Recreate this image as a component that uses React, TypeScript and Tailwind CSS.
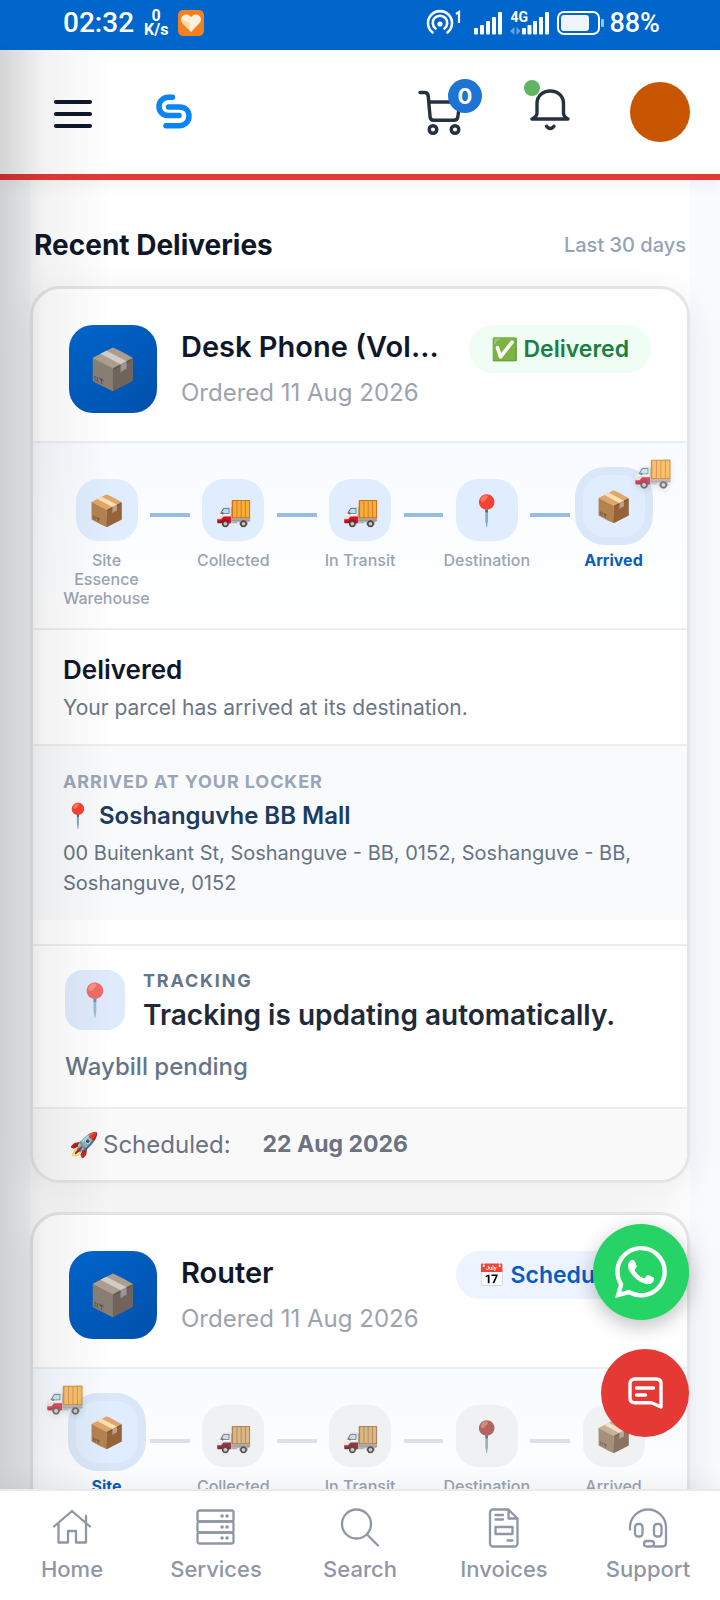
import type { ReactNode } from "react";

type StepState = "done" | "active" | "idle";
interface Step {
  icon: string;
  label: string;
  state: StepState;
  truck?: "left" | "right";
}

function StatusBar() {
  return (
    <div className="flex h-[50px] shrink-0 items-center justify-between bg-[#0066cc] pr-[60px] pb-1 pl-[63px] font-['Roboto',sans-serif] text-white">
      <div className="flex items-center gap-2.5">
        <span className="text-[28px] leading-none font-medium">02:32</span>
        <span className="flex flex-col items-center text-[16px] leading-[14px] font-bold">
          <span>0</span>
          <span>K/s</span>
        </span>
        <svg viewBox="0 0 26 26" className="size-[26px]" aria-hidden="true">
          <rect width="26" height="26" rx="5" fill="#f4801f" />
          <path d="M13 22 4.5 13a5 5 0 0 1 7-7.2L13 7l1.500-1.200a5 5 0 0 1 7 7.200z" fill="#fff1dc" />
          <path d="m3.500 9 9.500 5-3 5-5.500-5.800z" fill="#fbd7a8" />
        </svg>
      </div>
      <div className="flex items-center gap-1">
        <svg viewBox="0 0 36 28" className="h-7 w-9" fill="none" stroke="#fff" strokeWidth="2.600" aria-hidden="true">
          <path d="M6.500 23.500a12 12 0 1 1 15 0M9.500 19.500a7.200 7.200 0 1 1 9 0" strokeLinecap="round" />
          <circle cx="14" cy="15" r="2.600" fill="#fff" stroke="none" />
          <path d="m30 5 3-2v11" strokeWidth="2.200" />
        </svg>
        <svg viewBox="0 0 28 24" className="ml-2 h-6 w-7" fill="#fff" aria-hidden="true">
          <rect x="0" y="17" width="4" height="6.500" rx="1" />
          <rect x="6" y="14" width="4" height="9.500" rx="1" />
          <rect x="12" y="10" width="4" height="13.500" rx="1" />
          <rect x="18" y="6" width="4" height="17.500" rx="1" />
          <rect x="24" y="1" width="4" height="22.500" rx="1" />
        </svg>
        <span className="relative ml-1 flex">
          <span className="absolute -top-0.5 left-0 text-[14px] leading-4 font-bold">4G</span>
          <svg viewBox="0 0 39 24" className="h-6 w-[39px]" fill="#fff" aria-hidden="true">
            <path d="M4.500 16v8L0 20zM6.500 16v8l4-4z" opacity=".4" />
            <rect x="12" y="17" width="4" height="6.500" rx="1" />
            <rect x="17.500" y="14" width="4" height="9.500" rx="1" />
            <rect x="23" y="10" width="4" height="13.500" rx="1" />
            <rect x="29" y="6" width="4" height="17.500" rx="1" />
            <rect x="35" y="1" width="4" height="22.500" rx="1" />
          </svg>
        </span>
        <svg viewBox="0 0 48 26" className="ml-1 h-[26px] w-12" aria-hidden="true">
          <rect x="1" y="2" width="41" height="22" rx="6" fill="none" stroke="#fff" strokeWidth="2" />
          <rect x="4" y="5" width="28" height="16" rx="3" fill="#f1f5fb" />
          <rect x="44" y="9" width="3" height="8" rx="1" fill="#fff" opacity=".6" />
        </svg>
        <span className="text-[27px] leading-none font-medium">88%</span>
      </div>
    </div>
  );
}

function Header() {
  return (
    <header className="relative flex h-[130px] shrink-0 items-center border-b-6 border-[#e53935] bg-white pr-[30px] pl-[54px] shadow-[0_4px_16px_rgba(15,23,42,0.06)]">
      <button aria-label="Open menu" className="mt-1 flex w-[38px] flex-col gap-2">
        <span className="h-1 rounded-full bg-[#0f172a]" />
        <span className="h-1 rounded-full bg-[#0f172a]" />
        <span className="h-1 rounded-full bg-[#0f172a]" />
      </button>
      <a href="#home" aria-label="Site Essence" className="ml-16">
        <svg viewBox="0 0 36 36" className="size-9" fill="none" stroke="#0a84f0" strokeWidth="5.500" strokeLinecap="round" aria-hidden="true">
          <path d="M16.500 3.300h-4C7 3.300 3 7.200 3 12.300s3.600 9.200 9 9.200h11" />
          <path d="M12.500 13h11c5.500 0 9.500 3.500 9.500 9s-4 9.800-9.500 9.800H10" />
        </svg>
      </a>
      <div className="ml-auto flex items-center">
        <button aria-label="Cart" className="relative">
          <svg viewBox="0 0 44 46" className="h-[46px] w-11" fill="none" stroke="#26313f" strokeWidth="3.400" strokeLinecap="round" strokeLinejoin="round" aria-hidden="true">
            <path d="M2 3.500h4.500c2.500 0 3.500 1.500 3.700 3.500l1.900 21c.2 2.200 1.300 3.200 3.400 3.200h20.500c2.200 0 3.500-1 3.800-3.200L42 13H11" />
            <circle cx="15" cy="40.500" r="3.800" />
            <circle cx="37" cy="40.500" r="3.800" />
          </svg>
          <span className="absolute -top-2.5 left-[30px] flex size-[34px] items-center justify-center rounded-full bg-[#1d74d3] text-[22px] leading-none font-bold text-white">0</span>
        </button>
        <button aria-label="Notifications" className="relative -mt-1 ml-[68px]">
          <svg viewBox="0 0 40 44" className="h-11 w-10" fill="none" stroke="#26313f" strokeWidth="3.400" strokeLinecap="round" strokeLinejoin="round" aria-hidden="true">
            <path d="M2 31h36c-3-1.500-4.500-3-4.500-6v-9.500C33.500 8 28 3 20.300 3S7 8 7 15.500V25c0 3-2 4.500-5 6z" />
            <path d="M16.500 38.200c1.700 3 5.800 3 7.500 0" />
          </svg>
          <span className="absolute -top-2 -left-1.5 size-4 rounded-full bg-[#60b565]" />
        </button>
        <button aria-label="Account" className="ml-[60px] size-[60px] rounded-full bg-[#c85500]" />
      </div>
    </header>
  );
}

function StepItem({ step }: { step: Step }) {
  const active = step.state === "active";
  const idle = step.state === "idle";
  return (
    <div className="relative flex w-[87px] flex-col items-center gap-2.5">
      <span
        className={
          "flex size-[62px] items-center justify-center rounded-[22px] text-[30px] leading-none " +
          (active
            ? "-translate-y-1 bg-[#dfedfe] ring-8 ring-[#d9e7f8]"
            : idle
              ? "bg-[#f0f1f3]"
              : "bg-[#e0edfe]")
        }
      >
        <span className={idle ? "opacity-90 grayscale-[.5]" : ""}>{step.icon}</span>
      </span>
      {step.truck && (
        <span
          className={
            "absolute -top-7 text-[32px] leading-10 opacity-75 drop-shadow-md " +
            (step.truck === "right" ? "-right-4" : "-left-[18px]")
          }
        >
          🚚
        </span>
      )}
      <span
        className={
          "text-center text-[16px] leading-[19px] " +
          (active ? "font-bold text-[#0a5cc0]" : "font-medium text-[#99a4b5]")
        }
      >
        {step.label}
      </span>
    </div>
  );
}

function Stepper({ steps, connector }: { steps: Step[]; connector: string }) {
  return (
    <ol className="flex items-start border-y-2 border-[#ebedf1] bg-linear-to-b from-[#f8fbff] to-white px-[30px] pt-9 pb-5">
      {steps.map((step, i) => (
        <li key={step.label} className={i > 0 ? "flex flex-1 items-start" : "flex items-start"}>
          {i > 0 && <span className={"mt-[34px] h-1 min-w-2 flex-1 " + connector} />}
          <StepItem step={step} />
        </li>
      ))}
    </ol>
  );
}

function DeliveryCard({ title, badge, steps, connector, children }: {
  title: string;
  badge: ReactNode;
  steps: Step[];
  connector: string;
  children: ReactNode;
}) {
  return (
    <article className="overflow-hidden rounded-[30px] border-3 border-[#e4e5e9] bg-white shadow-[0_10px_40px_rgba(15,23,42,0.09)]">
      <div className="flex items-start gap-6 px-9 pt-9 pb-7">
        <span className="flex size-[88px] shrink-0 items-center justify-center rounded-3xl bg-linear-to-br from-[#0066d0] to-[#0050a8] text-[40px] leading-none">
          <span className="opacity-85 grayscale-[.4]">📦</span>
        </span>
        <div className="min-w-0 flex-1 pt-0.5">
          <h3 className="truncate text-[29px] leading-10 font-semibold text-[#0f172a]">{title}</h3>
          <p className="mt-2.5 text-[24px] leading-8 text-[#9ca3af]">Ordered 11 Aug 2026</p>
        </div>
        {badge}
      </div>
      <Stepper steps={steps} connector={connector} />
      {children}
    </article>
  );
}

const labels = ["Site Essence Warehouse", "Collected", "In Transit", "Destination", "Arrived"];
const icons = ["📦", "🚚", "🚚", "📍", "📦"];
const deliveredSteps: Step[] = labels.map((label, i) => ({
  label,
  icon: icons[i],
  state: i === 4 ? "active" : "done",
  truck: i === 4 ? "right" : undefined,
}));
const scheduledSteps: Step[] = labels.map((label, i) => ({
  label,
  icon: icons[i],
  state: i === 0 ? "active" : "idle",
  truck: i === 0 ? "left" : undefined,
}));

function Deliveries() {
  return (
    <section className="mx-[30px] bg-white pt-[47px]">
      <div className="flex items-center justify-between px-1 pb-[23px]">
        <h2 className="text-[28px] leading-9 font-bold text-[#0f172a]">Recent Deliveries</h2>
        <span className="text-[20px] leading-9 font-medium text-[#94a3b8]">Last 30 days</span>
      </div>
      <div className="flex flex-col gap-[29px]">
        <DeliveryCard
          title="Desk Phone (VoIP Handset)"
          steps={deliveredSteps}
          connector="bg-[#95bde7]"
          badge={
            <span className="flex h-12 shrink-0 items-center gap-1.5 rounded-full bg-[#effdf4] px-[22px] text-[23px] font-semibold text-[#1a7f40]">
              <span className="text-[22px]">✅</span>Delivered
            </span>
          }
        >
          <div className="px-[30px] py-5">
            <h4 className="text-[26px] leading-10 font-semibold text-[#0f172a]">Delivered</h4>
            <p className="mt-0.5 text-[21px] leading-8 text-[#6b7689]">Your parcel has arrived at its destination.</p>
          </div>
          <div className="border-t-2 border-[#ebedf1] bg-[#f8fafc] px-[30px] pt-6 pb-[22px]">
            <p className="text-[18px] leading-6 font-bold tracking-wider text-[#9aa6b8]">ARRIVED AT YOUR LOCKER</p>
            <p className="mt-1.5 flex items-center gap-1.5 text-[24px] leading-8 font-semibold text-[#1b3b60]">
              <span>📍</span>Soshanguvhe BB Mall
            </p>
            <p className="mt-1.5 text-[20px] leading-[30px] text-[#667386]">
              00 Buitenkant St, Soshanguve - BB, 0152, Soshanguve - BB, Soshanguve, 0152
            </p>
          </div>
          <div className="mt-6 border-t-2 border-[#ebedf1] px-8 py-6">
            <div className="flex gap-[18px]">
              <span className="flex size-[60px] shrink-0 items-center justify-center rounded-[18px] bg-[#dfeafc] text-[32px] leading-none">
                <span className="opacity-75">📍</span>
              </span>
              <div className="pt-px">
                <p className="text-[18px] leading-5 font-bold tracking-widest text-[#64748b]">TRACKING</p>
                <p className="mt-1 text-[28px] leading-10 font-semibold text-[#1f2937]">Tracking is updating automatically.</p>
              </div>
            </div>
            <p className="mt-4 text-[24px] leading-8 font-medium text-[#64748b]">Waybill pending</p>
          </div>
          <div className="flex h-[73px] items-center border-t-2 border-[#ebedf1] bg-[#f9f9fa] px-9 text-[24px] text-[#6b7280]">
            <span className="mr-1">🚀</span>Scheduled:
            <strong className="ml-8 text-[23px] font-bold">22 Aug 2026</strong>
          </div>
        </DeliveryCard>
        <DeliveryCard
          title="Router"
          steps={scheduledSteps}
          connector="bg-[#dce1e9]"
          badge={
            <span className="flex h-12 shrink-0 items-center gap-1.5 rounded-full bg-[#eef4ff] px-[22px] text-[23px] font-semibold text-[#0a5cc0]">
              <span className="text-[22px]">📅</span>Scheduled
            </span>
          }
        >
          <div className="px-[30px] py-5">
            <h4 className="text-[26px] leading-10 font-semibold text-[#0f172a]">Scheduled</h4>
          </div>
        </DeliveryCard>
      </div>
    </section>
  );
}

function FloatingActions() {
  return (
    <div className="absolute right-[31px] bottom-[52px] flex flex-col items-end gap-[29px]">
      <a href="#whatsapp" aria-label="WhatsApp" className="flex size-24 items-center justify-center rounded-full bg-[#25d366] shadow-[0_6px_20px_rgba(0,0,0,0.25)]">
        <svg viewBox="0 0 24 24" className="size-[52px]" fill="#fff" aria-hidden="true">
          <path d="M17.472 14.382c-.297-.149-1.758-.867-2.030-.967-.273-.099-.471-.148-.670.150-.197.297-.767.966-.940 1.164-.173.199-.347.223-.644.075-.297-.150-1.255-.463-2.390-1.475-.883-.788-1.480-1.761-1.653-2.059-.173-.297-.018-.458.130-.606.134-.133.298-.347.446-.520.149-.174.198-.298.298-.497.099-.198.050-.371-.025-.520-.075-.149-.669-1.612-.916-2.207-.242-.579-.487-.500-.669-.510-.173-.008-.371-.010-.570-.010-.198 0-.520.074-.792.372-.272.297-1.040 1.016-1.040 2.479 0 1.462 1.065 2.875 1.213 3.074.149.198 2.096 3.200 5.077 4.487.709.306 1.262.489 1.694.625.712.227 1.360.195 1.871.118.571-.085 1.758-.719 2.006-1.413.248-.694.248-1.289.173-1.413-.074-.124-.272-.198-.570-.347m-5.421 7.403h-.004a9.870 9.870 0 0 1-5.031-1.378l-.361-.214-3.741.982.998-3.648-.235-.374a9.860 9.860 0 0 1-1.510-5.260c.001-5.450 4.436-9.884 9.888-9.884 2.640 0 5.122 1.030 6.988 2.898a9.825 9.825 0 0 1 2.893 6.994c-.003 5.450-4.437 9.884-9.885 9.884m8.413-18.297A11.815 11.815 0 0 0 12.050 0C5.495 0 .160 5.335.157 11.892c0 2.096.547 4.142 1.588 5.945L.057 24l6.305-1.654a11.882 11.882 0 0 0 5.683 1.448h.005c6.554 0 11.890-5.335 11.893-11.893a11.821 11.821 0 0 0-3.480-8.413Z" />
        </svg>
      </a>
      <button aria-label="Chat" className="flex size-[88px] items-center justify-center rounded-full bg-[#e53935]">
        <svg viewBox="0 0 36 34" className="h-[34px] w-9" fill="none" stroke="#fff" strokeWidth="3.400" strokeLinecap="round" strokeLinejoin="round" aria-hidden="true">
          <path d="M34 31V7.500C34 4.500 32 3 29 3H8C5 3 3 4.800 3 7.500V22c0 3 2 4.800 5 4.800h16.500z" />
          <path d="M9.500 12h17M9.500 19h9" />
        </svg>
      </button>
    </div>
  );
}

const navItems: { label: string; icon: ReactNode }[] = [
  { label: "Home", icon: <path d="M2 18.500 20 3l18 15.500M34 15V8M6.500 15v19.500h9.500V23h8v11.500h10V15" /> },
  {
    label: "Services",
    icon: (
      <>
        <rect x="1.500" y="2.500" width="36" height="11" rx="2" />
        <rect x="1.500" y="13.500" width="36" height="11" rx="2" />
        <rect x="1.500" y="24.500" width="36" height="11" rx="2" />
        <path d="M26 8h.1M31 8h.1M26 19h.1M31 19h.1M26 30h.1M31 30h.1" strokeWidth="3.500" />
      </>
    ),
  },
  {
    label: "Search",
    icon: (
      <>
        <circle cx="16.500" cy="16" r="14.500" />
        <path d="m27 26.500 11 11" />
      </>
    ),
  },
  {
    label: "Invoices",
    icon: (
      <path d="M24.500 1.500H9a3 3 0 0 0-3 3v31a3 3 0 0 0 3 3h21.500a3 3 0 0 0 3-3v-25zv9h9M11.500 7h7.500M11.500 11.500h7.500M11.500 19h17v7h-17zM23.500 32.500h5" />
    ),
  },
  {
    label: "Support",
    icon: (
      <>
        <path d="M2 21.500v-2a17.700 17.700 0 0 1 36 0V35c0 2-1.200 3.500-3.500 3.500H26" />
        <rect x="7" y="16" width="7.500" height="12.500" rx="3" />
        <rect x="26" y="16" width="7.500" height="12.500" rx="3" />
        <rect x="16" y="33" width="10" height="5.500" rx="2.700" />
      </>
    ),
  },
];

function BottomNav() {
  return (
    <nav className="relative z-20 grid h-[111px] shrink-0 grid-cols-5 border-t-2 border-[#e9eaec] bg-white shadow-[0_-6px_24px_rgba(0,0,0,0.06)]">
      {navItems.map(({ label, icon }) => (
        <a key={label} href={"#" + label.toLowerCase()} className="flex flex-col items-center pt-[17px] text-[#8f97a6]">
          <svg viewBox="0 0 40 40" className="size-10" fill="none" stroke="currentColor" strokeWidth="2.300" strokeLinecap="round" strokeLinejoin="round" aria-hidden="true">
            {icon}
          </svg>
          <span className="mt-[5px] text-[22px] leading-8 font-medium">{label}</span>
        </a>
      ))}
    </nav>
  );
}

export default function App() {
  return (
    <div className="flex h-screen flex-col overflow-hidden bg-white font-['Inter','Noto_Sans',sans-serif]">
      <StatusBar />
      <div className="relative flex min-h-0 flex-1 flex-col">
        <Header />
        <main className="min-h-0 flex-1 overflow-hidden bg-[#f9fbff]">
          <Deliveries />
        </main>
        <div className="pointer-events-none absolute inset-y-0 left-0 w-28 bg-linear-to-r from-black/17 via-black/5 via-40% to-transparent" />
        <FloatingActions />
      </div>
      <BottomNav />
    </div>
  );
}
